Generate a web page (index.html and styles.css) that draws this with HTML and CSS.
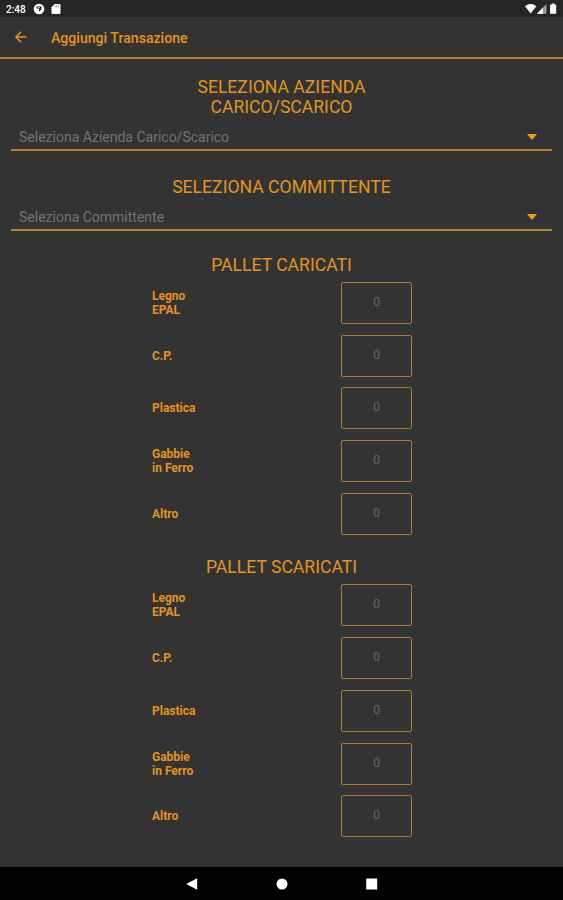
FILE: index.html
```html
<!DOCTYPE html>
<html lang="it">
<head>
    <meta charset="UTF-8">
    <meta name="viewport" content="width=device-width, initial-scale=1.0">
    <title>Aggiungi Transazione</title>
    <link rel="stylesheet" href="styles.css">
</head>
<body>
    <div class="status-bar">
        <span class="clock">2:48</span>
        <svg class="status-app" width="12" height="12" viewBox="0 0 12 12">
            <circle cx="6" cy="6" r="5.3" fill="#fff"/>
            <path d="M3.5 3.4H8.4V6.4L6 8.6V5.6H3.5z" fill="#252525"/>
            <path d="M4.6 4.6h2.4" stroke="#fff" stroke-width=".7"/>
        </svg>
        <svg class="status-card" width="10" height="12" viewBox="0 0 10 12">
            <path d="M3.6 1H8.5q1 0 1 1v8q0 1-1 1h-7q-1 0-1-1V4.2z" fill="#fff"/>
            <path d="M3.8 2.4v1.8M5.6 2.4v1.8M7.4 2.4v1.8" stroke="#777" stroke-width=".8"/>
        </svg>
        <svg class="status-right" width="34" height="12" viewBox="0 0 34 12">
            <path d="M0 3.2Q5.7-1 11.4 3.2L5.7 10.6z" fill="#fff"/>
            <path d="M11.8 10.8L21.5 1v9.8z" fill="#999"/>
            <path d="M11.8 10.8L18 4.6v6.2z" fill="#fff"/>
            <path d="M25 1.8h1.6V.5h3v1.3h1.6v9H25z" fill="#fff"/>
        </svg>
    </div>

    <header class="app-bar">
        <svg class="back" width="14" height="14" viewBox="0 0 14 14">
            <path d="M12.4 7H2M7 1.9L1.9 7 7 12.1" fill="none" stroke="#e5941c" stroke-width="1.5"/>
        </svg>
        <h1>Aggiungi Transazione</h1>
    </header>

    <main class="content">
        <h2 class="title-azienda">SELEZIONA AZIENDA<br>CARICO/SCARICO</h2>
        <div class="select select-azienda">
            <span>Seleziona Azienda Carico/Scarico</span>
            <i class="caret"></i>
        </div>

        <h2 class="title-committente">SELEZIONA COMMITTENTE</h2>
        <div class="select select-committente">
            <span>Seleziona Committente</span>
            <i class="caret"></i>
        </div>

        <section class="pallets loaded">
            <h2>PALLET CARICATI</h2>
            <div class="row"><label>Legno<br>EPAL</label><div class="qty">0</div></div>
            <div class="row"><label>C.P.</label><div class="qty">0</div></div>
            <div class="row"><label>Plastica</label><div class="qty">0</div></div>
            <div class="row"><label>Gabbie<br>in Ferro</label><div class="qty">0</div></div>
            <div class="row"><label>Altro</label><div class="qty">0</div></div>
        </section>

        <section class="pallets unloaded">
            <h2>PALLET SCARICATI</h2>
            <div class="row"><label>Legno<br>EPAL</label><div class="qty">0</div></div>
            <div class="row"><label>C.P.</label><div class="qty">0</div></div>
            <div class="row"><label>Plastica</label><div class="qty">0</div></div>
            <div class="row"><label>Gabbie<br>in Ferro</label><div class="qty">0</div></div>
            <div class="row"><label>Altro</label><div class="qty">0</div></div>
        </section>
    </main>

    <nav class="nav-bar">
        <svg width="12" height="12" viewBox="0 0 12 12"><path d="M.2 6L11.2.2v11.6z" fill="#fff"/></svg>
        <svg width="12" height="12" viewBox="0 0 12 12"><circle cx="6" cy="6" r="5.5" fill="#fff"/></svg>
        <svg width="12" height="12" viewBox="0 0 12 12"><rect x=".2" y=".5" width="11" height="11" rx=".5" fill="#fff"/></svg>
    </nav>
</body>
</html>
```
FILE: styles.css
```css
* {
    box-sizing: border-box;
}

body {
    margin: 0;
    height: 900px;
    display: flex;
    flex-direction: column;
    overflow: hidden;
    background-color: #333333;
    color: #e5941c;
    font-family: Roboto, "Liberation Sans", sans-serif;
}

/* Android status bar */
.status-bar {
    display: flex;
    align-items: center;
    height: 17px;
    padding: 1px 4px 0 6px;
    background-color: #252525;
    color: #ffffff;
}

.clock {
    width: 27px;
    font-size: 10px;
    font-weight: 500;
}

.status-card {
    margin-left: 6px;
}

.status-right {
    margin-left: auto;
}

/* Header */
.app-bar {
    display: flex;
    align-items: center;
    height: 42px;
    padding-left: 14px;
    border-bottom: 2px solid #b9812b;
}

.app-bar h1 {
    margin: 1px 0 0 23px;
    font-size: 14.1px;
    font-weight: 500;
    line-height: 20px;
}

.content {
    flex: 1;
}

h2 {
    margin: 0;
    font-size: 17.6px;
    font-weight: 400;
    line-height: 20px;
    text-align: center;
}

.title-azienda {
    padding-top: 18px;
}

.title-committente {
    padding-top: 26px;
}

.select {
    display: flex;
    align-items: center;
    justify-content: space-between;
    height: 34px;
    margin: 0 11px;
    padding: 8px 15px 0 8px;
    color: #737373;
    font-size: 14px;
}

.select-azienda {
    border-bottom: 2px solid #c27d24;
}

.select-committente {
    border-bottom: 2px solid #b48932;
}

.caret {
    border: 5px solid transparent;
    border-top: 6px solid #f39c1a;
    border-bottom: 0;
}

/* Pallet quantities */
.loaded {
    padding-top: 23.6px;
}

.unloaded {
    padding-top: 16.6px;
}

.pallets h2 {
    margin-bottom: 2px;
}

.row {
    display: flex;
    align-items: center;
    justify-content: space-between;
    width: 260px;
    height: 52.75px;
    margin-left: 152px;
}

.row label {
    font-size: 12px;
    font-weight: 700;
    line-height: 14px;
}

.qty {
    width: 71px;
    height: 42px;
    border: 1px solid #b27a2a;
    border-radius: 2px;
    color: #666666;
    font-size: 12px;
    line-height: 38px;
    text-align: center;
}

/* Android navigation buttons */
.nav-bar {
    display: flex;
    align-items: center;
    justify-content: center;
    gap: 78px;
    height: 33px;
    background-color: #000000;
}
```
